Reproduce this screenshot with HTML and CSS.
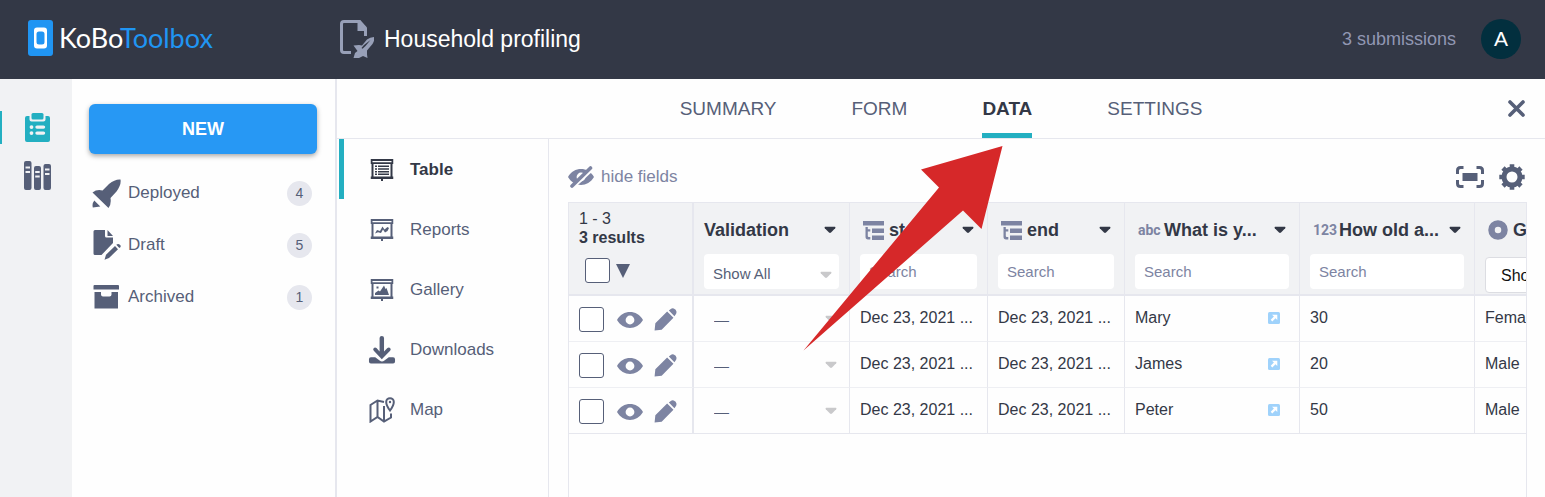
FILE: index.html
```html
<!DOCTYPE html>
<html lang="en">
<head>
<meta charset="utf-8">
<title>Household profiling</title>
<link rel="stylesheet" href="styles.css">
</head>
<body>
<svg class="defs" aria-hidden="true">
  <symbol id="caret" viewBox="0 0 12 8"><path d="M1 .8h10q.9.6.2 1.4L7 6.6q-1 .8-2 0L.8 2.2Q.1 1.400 1 .8z"/></symbol>
  <symbol id="eye" viewBox="0 0 26 16"><path fill-rule="evenodd" d="M0 8C6-2.600 20-2.600 26 8 20 18.600 6 18.600 0 8zM13 3.600a4.400 4.400 0 1 0 0 8.800 4.400 4.400 0 0 0 0-8.800z"/></symbol>
  <symbol id="pencil" viewBox="0 0 24 24"><path d="M.6 23.400 1.400 16 13.700 3.700l6.600 6.600L8 22.600zM15.500 2.500 17.500 1q1.500-1 3.100-.4 2.600 1 2.900 3.400.1 1.700-.9 2.700l-1.300 1.800z"/></symbol>
  <symbol id="group" viewBox="0 0 21 19"><path d="M0 0h21v4.500H0zM9 7.500h12v4.500H9zM9 14.500h12V19H9zM2.500 6h2.300v2.300h2.500v2.200H4.800v4.600q0 1 1 1h1.500v2.300H5q-2.500 0-2.500-2.700z"/></symbol>
  <symbol id="open" viewBox="0 0 12 12"><rect width="12" height="12" rx="1.500" fill="#9fd2fb"/><path d="M4 2.700h5.300V8L7.500 6.200 4.300 9.400 2.700 7.800l3.200-3.200z" fill="#fff"/></symbol>
  <symbol id="board" viewBox="0 0 23 22"><path fill-rule="evenodd" d="M0 0h23v5h-1v12.500h1V20H12.500v2h-2v-2H0v-2.500h1V5H0zM2 2v1.200h19V2zM3 5v12.500h17V5z"/></symbol>
</svg>

<header class="topbar">
  <a class="brand" href="#" aria-label="KoBoToolbox">
    <svg class="brand-mark" viewBox="0 0 25 36"><rect width="25" height="36" rx="3" fill="#2095f3"/><path fill="#fff" fill-rule="evenodd" d="M9 7.500h7q3 0 3 3v15q0 3-3 3H9q-3 0-3-3v-15q0-3 3-3zM11 11.500q-2.500 0-2.500 2.500v8q0 2.500 2.500 2.500h3q2.500 0 2.500-2.500v-8q0-2.500-2.500-2.500z"/></svg>
    <span class="brand-name">KoBo<span class="brand-tool">Toolbox</span></span>
  </a>
  <div class="project">
    <svg class="project-icon" viewBox="0 0 34 38"><path d="M11 32.500H4q-2.500 0-2.500-2.500V4Q1.500 1.500 4 1.500h15L25.500 9v7" fill="none" stroke="#98a0b8" stroke-width="3"/><path fill="#98a0b8" d="M17.500 0h2.800L27 7.500V11h-9.500z"/><path fill="#98a0b8" fill-rule="evenodd" d="M34 17q1 3-1.500 7L27 30.500v4L27.500 38 23 36l-4 2h-5.500l1.500-5 2.500-2-4-5.500 5.500-.5 3 .5 5-6q3-2.500 7-2.500zM24 25l-2.500 3 1 .7 3-2.700 5-6z"/></svg>
    <h1 class="project-name">Household profiling</h1>
  </div>
  <span class="submissions">3 submissions</span>
  <button class="avatar" type="button" aria-label="Account">A</button>
</header>

<div class="layout">
  <nav class="rail" aria-label="Sections">
    <a class="rail-link rail-active" href="#" aria-label="Projects"><svg width="25" height="29" viewBox="0 0 25 29"><path fill-rule="evenodd" d="M2 3h2.500v3.500Q4.500 8.500 6.500 8.500h12q2 0 2-2V3H23q2 0 2 2v22q0 2-2 2H2q-2 0-2-2V5q0-2 2-2zM6.500 12.200a1.900 1.900 0 1 0 0 3.800 1.900 1.900 0 0 0 0-3.800zm5.500.2a1.600 1.600 0 0 0 0 3.400h6.500a1.600 1.600 0 0 0 0-3.400zm-5.500 5.800a1.900 1.900 0 1 0 0 3.800 1.900 1.900 0 0 0 0-3.800zm5.500.2a1.600 1.600 0 0 0 0 3.400h6.500a1.600 1.600 0 0 0 0-3.400z"/><rect x="6.500" width="12" height="6.500" rx="1.500"/></svg></a>
    <a class="rail-link" href="#" aria-label="Library"><svg width="27" height="29" viewBox="0 0 27 29"><path fill-rule="evenodd" d="M2 0h3.500q2 0 2 2v25q0 2-2 2H2q-2 0-2-2V2q0-2 2-2zM1.500 5.500v2H6v-2zm0 4.500v2H6v-2zM12 5h3q2 0 2 2v20q0 2-2 2h-3q-2 0-2-2V7q0-2 2-2zM11.200 10v2h4.500v-2zm0 4.500v2h4.500v-2zM21.500 3H25q2 0 2 2v22q0 2-2 2h-3.500q-2 0-2-2V5q0-2 2-2zM21 7.500v2h4.500v-2zm0 4.500v2h4.500v-2z"/></svg></a>
  </nav>

  <aside class="sidebar">
    <button class="new-button" type="button">NEW</button>
    <a class="folder" href="#"><svg width="29" height="29" viewBox="0 0 29 29"><path d="M28.500.5q1 5-4 12L18.500 19q1 6-2 10L.5 13.500q4.500-3.500 10-2L17 5q6-5 11.500-4.500zM2.300 21.500l6 6L.8 28.500q-1-4 1.500-7z"/></svg><span class="folder-name">Deployed</span><span class="count">4</span></a>
    <a class="folder" href="#"><svg width="29" height="30" viewBox="0 0 29 30"><path d="M3 0h10v6q0 1.500 1.500 1.500H21v5.500L9.500 25H3q-1.500 0-1.500-1.500v-22Q1.500 0 3 0zM15.500 0 21 6h-5.500zM12.500 29.800l1.500-5 9-8.800 3 3.300-9 8.700zM24.300 14.800q2-1.600 3.800.2 1.600 1.400-.8 3z"/></svg><span class="folder-name">Draft</span><span class="count">5</span></a>
    <a class="folder" href="#"><svg width="29" height="24" viewBox="0 0 29 24"><path d="M2.500 0H26q1 0 1 1v3.500H1.500V1q0-1 1-1zM2.500 7H9v2.500q0 2 2 2h6.500q2 0 2-2V7H26v16.500H2.500z"/></svg><span class="folder-name">Archived</span><span class="count">1</span></a>
  </aside>

  <main class="main">
    <div class="tabbar">
      <nav class="tabs" aria-label="Project views">
        <a class="tab" href="#">SUMMARY</a>
        <a class="tab" href="#">FORM</a>
        <a class="tab tab-active" href="#">DATA<svg class="pointer" viewBox="0 0 200 206" aria-hidden="true"><path d="M199.500 1 118 24.500 136 42.500.5 205.500 160 65.500 178.500 84z" fill="#d62829"/></svg></a>
        <a class="tab" href="#">SETTINGS</a>
      </nav>
      <button class="close" type="button" aria-label="Close"><svg width="17" height="17" viewBox="0 0 17 17"><path d="M2 2l13 13M15 2 2 15" stroke="#565f78" stroke-width="3.600" stroke-linecap="round"/></svg></button>
    </div>

    <div class="body">
      <nav class="subnav" aria-label="Data views">
        <a class="view view-active" href="#"><svg class="view-icon icon-board" viewBox="0 0 23 22"><use href="#board"/><path d="M4.500 6.500h2V8h-2zm3 0h11V8h-11zm-3 2.700h2v1.500h-2zm3 0h11v1.500h-11zm-3 2.700h2v1.500h-2zm3 0h11v1.500h-11zm-3 2.700h2V16h-2zm3 0h11V16h-11z"/></svg>Table</a>
        <a class="view" href="#"><svg class="view-icon icon-board" viewBox="0 0 23 22"><use href="#board"/><path d="M4.500 14.500 6.500 11l3 1L12 7.500l2 3L17 8l1.500 1-1.500 3-2.500 1.500-2-3-2 3.500-3-.8z"/></svg>Reports</a>
        <a class="view" href="#"><svg class="view-icon icon-board" viewBox="0 0 23 22"><use href="#board"/><path d="M4.500 16v-2L8 11.500l1.500 1 4-6 1.500 3.500 1-1L18.500 16zM6 7.500h2v2H6z"/></svg>Gallery</a>
        <a class="view" href="#"><svg class="view-icon icon-download" viewBox="0 0 27 29"><path d="M11 2q0-2 2.300-2t2.300 2v14l3.500-3.500q1.500-1.300 2.800 0 1.300 1.500 0 2.800L13.300 24 5 15.300q-1.300-1.300 0-2.800 1.300-1.300 2.800 0L11 16zM2 22h4.500l4.500 3.500q2.500 1.800 5 0l4.500-3.500H25q2 0 2 2v2.500q0 2-2 2H2q-2 0-2-2V24q0-2 2-2z"/></svg>Downloads</a>
        <a class="view" href="#"><svg class="view-icon icon-map" viewBox="0 0 26 26"><path d="M15 5 8.500 3.500 1.500 8v16.500l7-4.500 6.500 4.500 7-4v-4M8.500 4v16M15 9v15" fill="none" stroke="#565f78" stroke-width="2"/><path d="M21 13.500Q17.200 8.500 17.200 5a3.800 3.800 0 0 1 7.600 0q0 3.500-3.800 8.500z" fill="#fefefe" stroke="#565f78" stroke-width="2"/><circle cx="21" cy="5" r="1.200"/></svg>Map</a>
      </nav>

      <section class="content">
        <div class="toolbar">
          <button class="hide-fields" type="button"><svg width="27" height="22" viewBox="0 0 27 22"><use href="#eye" x="0" y="3" width="26" height="16"/><path d="M5 21.500 25 3" stroke="#fefefe" stroke-width="3"/><path d="M4 20 22.500 2" stroke="#7d84a2" stroke-width="3.600" stroke-linecap="round"/></svg>hide fields</button>
          <button class="tool" type="button" aria-label="Full screen"><svg width="28" height="22" viewBox="0 0 28 22"><path d="M7.500 1.500h-3q-3 0-3 3V8M20.500 1.500h3q3 0 3 3V8M7.500 20.500h-3q-3 0-3-3V14M20.500 20.500h3q3 0 3-3V14" fill="none" stroke="#565f78" stroke-width="3"/><path d="M6.500 7h15v8h-15z"/></svg></button>
          <button class="tool" type="button" aria-label="Settings"><svg width="26" height="26" viewBox="0 0 26 26"><circle cx="13" cy="13" r="8" fill="none" stroke="#565f78" stroke-width="5"/><path d="M13 .3v4M13 21.700v4M.3 13h4M21.700 13h4M4 4l2.700 2.700M19.300 19.300 22 22M22 4l-2.700 2.700M6.700 19.300 4 22" stroke="#565f78" stroke-width="4.600"/></svg></button>
        </div>

        <div class="grid-wrap">
          <table class="grid">
            <colgroup><col class="col-actions"><col class="col-validation"><col class="col-start"><col class="col-end"><col class="col-wide"><col class="col-wide"><col class="col-wide"></colgroup>
            <thead>
              <tr>
                <th class="frozen"><div class="results"><span class="range">1 - 3</span><span>3 results</span></div><div class="select-all"><input class="check" type="checkbox" aria-label="Select all"><button class="bulk" type="button" aria-label="Selection menu"><svg width="14" height="14" viewBox="0 0 14 14"><path d="M0 0h14L7 14z"/></svg></button></div></th>
                <th><div class="head"><span class="head-name">Validation</span><svg class="caret"><use href="#caret"/></svg></div><div class="picker"><select class="filter filter-select" aria-label="Filter validation"><option>Show All</option></select><svg class="caret picker-caret"><use href="#caret"/></svg></div></th>
                <th><div class="head head-typed"><svg class="type-icon"><use href="#group"/></svg><span class="head-name">start</span><svg class="caret"><use href="#caret"/></svg></div><input class="filter" type="text" placeholder="Search" aria-label="Filter start"></th>
                <th><div class="head head-typed"><svg class="type-icon"><use href="#group"/></svg><span class="head-name">end</span><svg class="caret"><use href="#caret"/></svg></div><input class="filter" type="text" placeholder="Search" aria-label="Filter end"></th>
                <th><div class="head head-typed"><span class="type-text">abc</span><span class="head-name">What is y...</span><svg class="caret"><use href="#caret"/></svg></div><input class="filter" type="text" placeholder="Search" aria-label="Filter name"></th>
                <th><div class="head head-typed"><span class="type-text">123</span><span class="head-name">How old a...</span><svg class="caret"><use href="#caret"/></svg></div><input class="filter" type="text" placeholder="Search" aria-label="Filter age"></th>
                <th><div class="head head-typed"><svg class="type-radio" viewBox="0 0 20 20"><circle cx="10" cy="10" r="6.500" fill="none" stroke="#7d84a2" stroke-width="6.500"/></svg><span class="head-name">Gender</span></div><select class="filter filter-plain" aria-label="Filter gender"><option>Show All</option></select></th>
              </tr>
            </thead>
            <tbody>
              <tr>
                <td class="frozen"><div class="actions"><input class="check" type="checkbox" aria-label="Select Mary"><button class="act" type="button" aria-label="View"><svg width="26" height="16"><use href="#eye"/></svg></button><button class="act" type="button" aria-label="Edit"><svg width="23" height="23"><use href="#pencil"/></svg></button></div></td>
                <td><div class="picker"><select class="status" aria-label="Validation of Mary"><option>—</option></select><svg class="caret picker-caret"><use href="#caret"/></svg></div></td>
                <td>Dec 23, 2021 ...</td><td>Dec 23, 2021 ...</td>
                <td><div class="with-link">Mary<a class="open" href="#" aria-label="Open"><svg width="12" height="12"><use href="#open"/></svg></a></div></td>
                <td>30</td><td>Female</td>
              </tr>
              <tr>
                <td class="frozen"><div class="actions"><input class="check" type="checkbox" aria-label="Select James"><button class="act" type="button" aria-label="View"><svg width="26" height="16"><use href="#eye"/></svg></button><button class="act" type="button" aria-label="Edit"><svg width="23" height="23"><use href="#pencil"/></svg></button></div></td>
                <td><div class="picker"><select class="status" aria-label="Validation of James"><option>—</option></select><svg class="caret picker-caret"><use href="#caret"/></svg></div></td>
                <td>Dec 23, 2021 ...</td><td>Dec 23, 2021 ...</td>
                <td><div class="with-link">James<a class="open" href="#" aria-label="Open"><svg width="12" height="12"><use href="#open"/></svg></a></div></td>
                <td>20</td><td>Male</td>
              </tr>
              <tr>
                <td class="frozen"><div class="actions"><input class="check" type="checkbox" aria-label="Select Peter"><button class="act" type="button" aria-label="View"><svg width="26" height="16"><use href="#eye"/></svg></button><button class="act" type="button" aria-label="Edit"><svg width="23" height="23"><use href="#pencil"/></svg></button></div></td>
                <td><div class="picker"><select class="status" aria-label="Validation of Peter"><option>—</option></select><svg class="caret picker-caret"><use href="#caret"/></svg></div></td>
                <td>Dec 23, 2021 ...</td><td>Dec 23, 2021 ...</td>
                <td><div class="with-link">Peter<a class="open" href="#" aria-label="Open"><svg width="12" height="12"><use href="#open"/></svg></a></div></td>
                <td>50</td><td>Male</td>
              </tr>
            </tbody>
          </table>
        </div>
      </section>
    </div>
  </main>
</div>
</body>
</html>
```
FILE: styles.css
```css
:root {
  --ink: #333846;
  --slate: #565f78;
  --muted: #7d84a2;
  --line: #e6e7ee;
  --teal: #23afc1;
  --blue: #2798f4;
  --panel: #f1f2f4;
  --paper: #fefefe;
}

* { box-sizing: border-box; }

body {
  margin: 0;
  min-height: 100vh;
  display: flex;
  flex-direction: column;
  background: var(--paper);
  color: var(--ink);
  font-family: "Liberation Sans", Arial, sans-serif;
  font-size: 16px;
}

a { color: inherit; text-decoration: none; }
svg { display: block; flex: none; fill: currentColor; }
.defs { position: absolute; width: 0; height: 0; }

button, input, select {
  margin: 0;
  padding: 0;
  border: 0;
  background: none;
  color: inherit;
  font: inherit;
}

.topbar {
  display: flex;
  align-items: center;
  height: 79px;
  padding: 0 24px 1px 28px;
  background: var(--ink);
  color: #fff;
}

.brand { display: flex; align-items: center; gap: 6px; width: 312px; padding-bottom: 2px; }
.brand-mark { width: 25px; height: 36px; }
.brand-name { font: 400 27px/36px Lato, "Open Sans", sans-serif; }
.brand-tool { color: #2095f3; }

.project { display: flex; align-items: center; gap: 10px; flex: 1; }
.project-icon { width: 34px; height: 38px; }
.project-name { margin: 0; font-size: 23px; font-weight: 400; line-height: 28px; }

.submissions { margin-right: 25px; color: #9197b3; font-size: 18px; }

.avatar {
  width: 40px;
  height: 40px;
  border-radius: 50%;
  background: #022f3e;
  font-size: 21px;
}

.layout { display: flex; flex: 1; }

.rail { width: 72px; padding-top: 24px; background: var(--panel); color: var(--slate); }
.rail-link { display: grid; place-items: center; height: 48px; padding-left: 3px; }
.rail-active {
  color: var(--teal);
  background: linear-gradient(var(--teal), var(--teal)) left center / 2px 33px no-repeat;
}

.sidebar {
  width: 265px;
  padding: 25px 18px 0 17px;
  border-right: 2px solid var(--line);
  color: var(--slate);
}

.new-button {
  width: 100%;
  height: 50px;
  margin-bottom: 13px;
  border-radius: 6px;
  background: var(--blue);
  box-shadow: 0 2px 5px rgba(0, 0, 0, .35);
  color: #fff;
  font-size: 18px;
  font-weight: 700;
}

.folder { display: flex; align-items: center; gap: 7px; height: 52px; padding: 0 5px 0 3px; font-size: 17px; }
.folder-name { flex: 1; }
.count {
  width: 25px;
  border-radius: 50%;
  background: var(--line);
  font-size: 14px;
  line-height: 25px;
  text-align: center;
}

.main { display: flex; flex: 1; flex-direction: column; min-width: 0; }

.tabbar {
  position: relative;
  display: flex;
  justify-content: center;
  height: 60px;
  border-bottom: 1px solid var(--line);
}
.tabs { display: flex; gap: 75px; }
.tab {
  position: relative;
  padding-top: 2px;
  border-bottom: 5px solid transparent;
  color: var(--slate);
  font-size: 19px;
  line-height: 56px;
}
.tab-active { border-color: var(--teal); color: var(--ink); font-weight: 700; }
.pointer {
  position: absolute;
  z-index: 2;
  top: 66px;
  right: 29px;
  width: 200px;
  height: 206px;
  pointer-events: none;
}
.close { position: absolute; top: 21px; right: 20px; }

.body { display: flex; flex: 1; padding-left: 2px; }

.subnav { width: 210px; border-right: 1px solid var(--line); color: var(--slate); }
.view {
  display: flex;
  align-items: center;
  gap: 14px;
  height: 60px;
  padding: 2px 0 0 24px;
  border-left: 5px solid transparent;
  font-size: 17px;
}
.view-active { border-color: var(--teal); color: var(--ink); font-weight: 700; }
.view-icon { width: 28px; }
.icon-board { height: 22px; }
.icon-download { height: 28px; }
.icon-map { height: 26px; }

.content { display: flex; flex: 1; flex-direction: column; min-width: 0; padding: 0 18px 0 19px; }

.toolbar { display: flex; align-items: center; gap: 15px; height: 63px; padding: 13px 2px 0 0; color: var(--slate); }
.hide-fields { display: flex; align-items: center; gap: 6px; margin-right: auto; color: var(--muted); font-size: 17px; }

.grid-wrap { flex: 1; overflow: hidden; border: 1px solid var(--line); border-bottom: 0; }

.grid { width: max-content; table-layout: fixed; border-collapse: separate; border-spacing: 0; }
.col-actions { width: 125px; }
.col-validation { width: 156px; }
.col-start { width: 138px; }
.col-end { width: 137px; }
.col-wide { width: 175px; }

th {
  height: 93px;
  padding: 0 10px;
  border-right: 1px solid var(--line);
  border-bottom: 2px solid var(--line);
  background: var(--panel);
  font-weight: 400;
  text-align: left;
  vertical-align: top;
}
td { height: 46px; padding: 0 10px 2px; border-right: 1px solid var(--line); border-bottom: 1px solid #eeeff3; }
tbody tr:last-child td { border-bottom-color: var(--line); }
.frozen { border-right-width: 2px; }

.results { display: grid; padding-top: 6px; font-weight: 700; line-height: 19px; }
.range { font-weight: 400; }
.select-all { display: flex; align-items: center; gap: 6px; padding: 11px 0 0 6px; }
.bulk { color: var(--slate); }

.check {
  width: 25px;
  height: 25px;
  border: 1px solid var(--slate);
  border-radius: 3px;
  background: #fff;
  appearance: none;
}
.actions { display: flex; align-items: center; padding-top: 4px; color: var(--muted); }
.act + .act { margin-left: 11px; }
.actions .check { margin-right: 13px; }

.head { display: flex; align-items: center; height: 51px; padding: 3px 3px 0 0; }
.head-typed { padding-left: 3px; }
.head-name { flex: 1; font-size: 18px; font-weight: 700; white-space: nowrap; }
.caret { width: 12px; height: 8px; }
.type-icon { width: 21px; height: 19px; margin-right: 5px; color: var(--muted); }
.type-radio { width: 20px; height: 20px; margin-right: 5px; }
.type-text {
  width: 26px;
  color: var(--muted);
  font: 700 14px/20px Roboto, sans-serif;
}

.filter {
  display: block;
  width: 100%;
  height: 35px;
  padding: 0 9px;
  border-radius: 4px;
  background: #fff;
  font-size: 15px;
}
.filter::placeholder { color: var(--muted); opacity: 1; }
.filter-select { padding-top: 4px; color: var(--slate); appearance: none; }
.filter-plain { height: 36px; margin-top: 3px; padding-left: 15px; border: 1px solid #dcdde2; color: #111; font-size: 16px; appearance: none; }

.picker { position: relative; }
.picker-caret { position: absolute; top: 17px; right: 7px; color: #c9c9cb; pointer-events: none; }
.status { display: block; width: 100%; height: 42px; padding: 4px 10px 0; font-size: 15px; color: var(--slate); appearance: none; }
td .picker-caret { top: 18px; right: 2px; }

.with-link { display: flex; align-items: center; justify-content: space-between; padding-right: 9px; }
```
